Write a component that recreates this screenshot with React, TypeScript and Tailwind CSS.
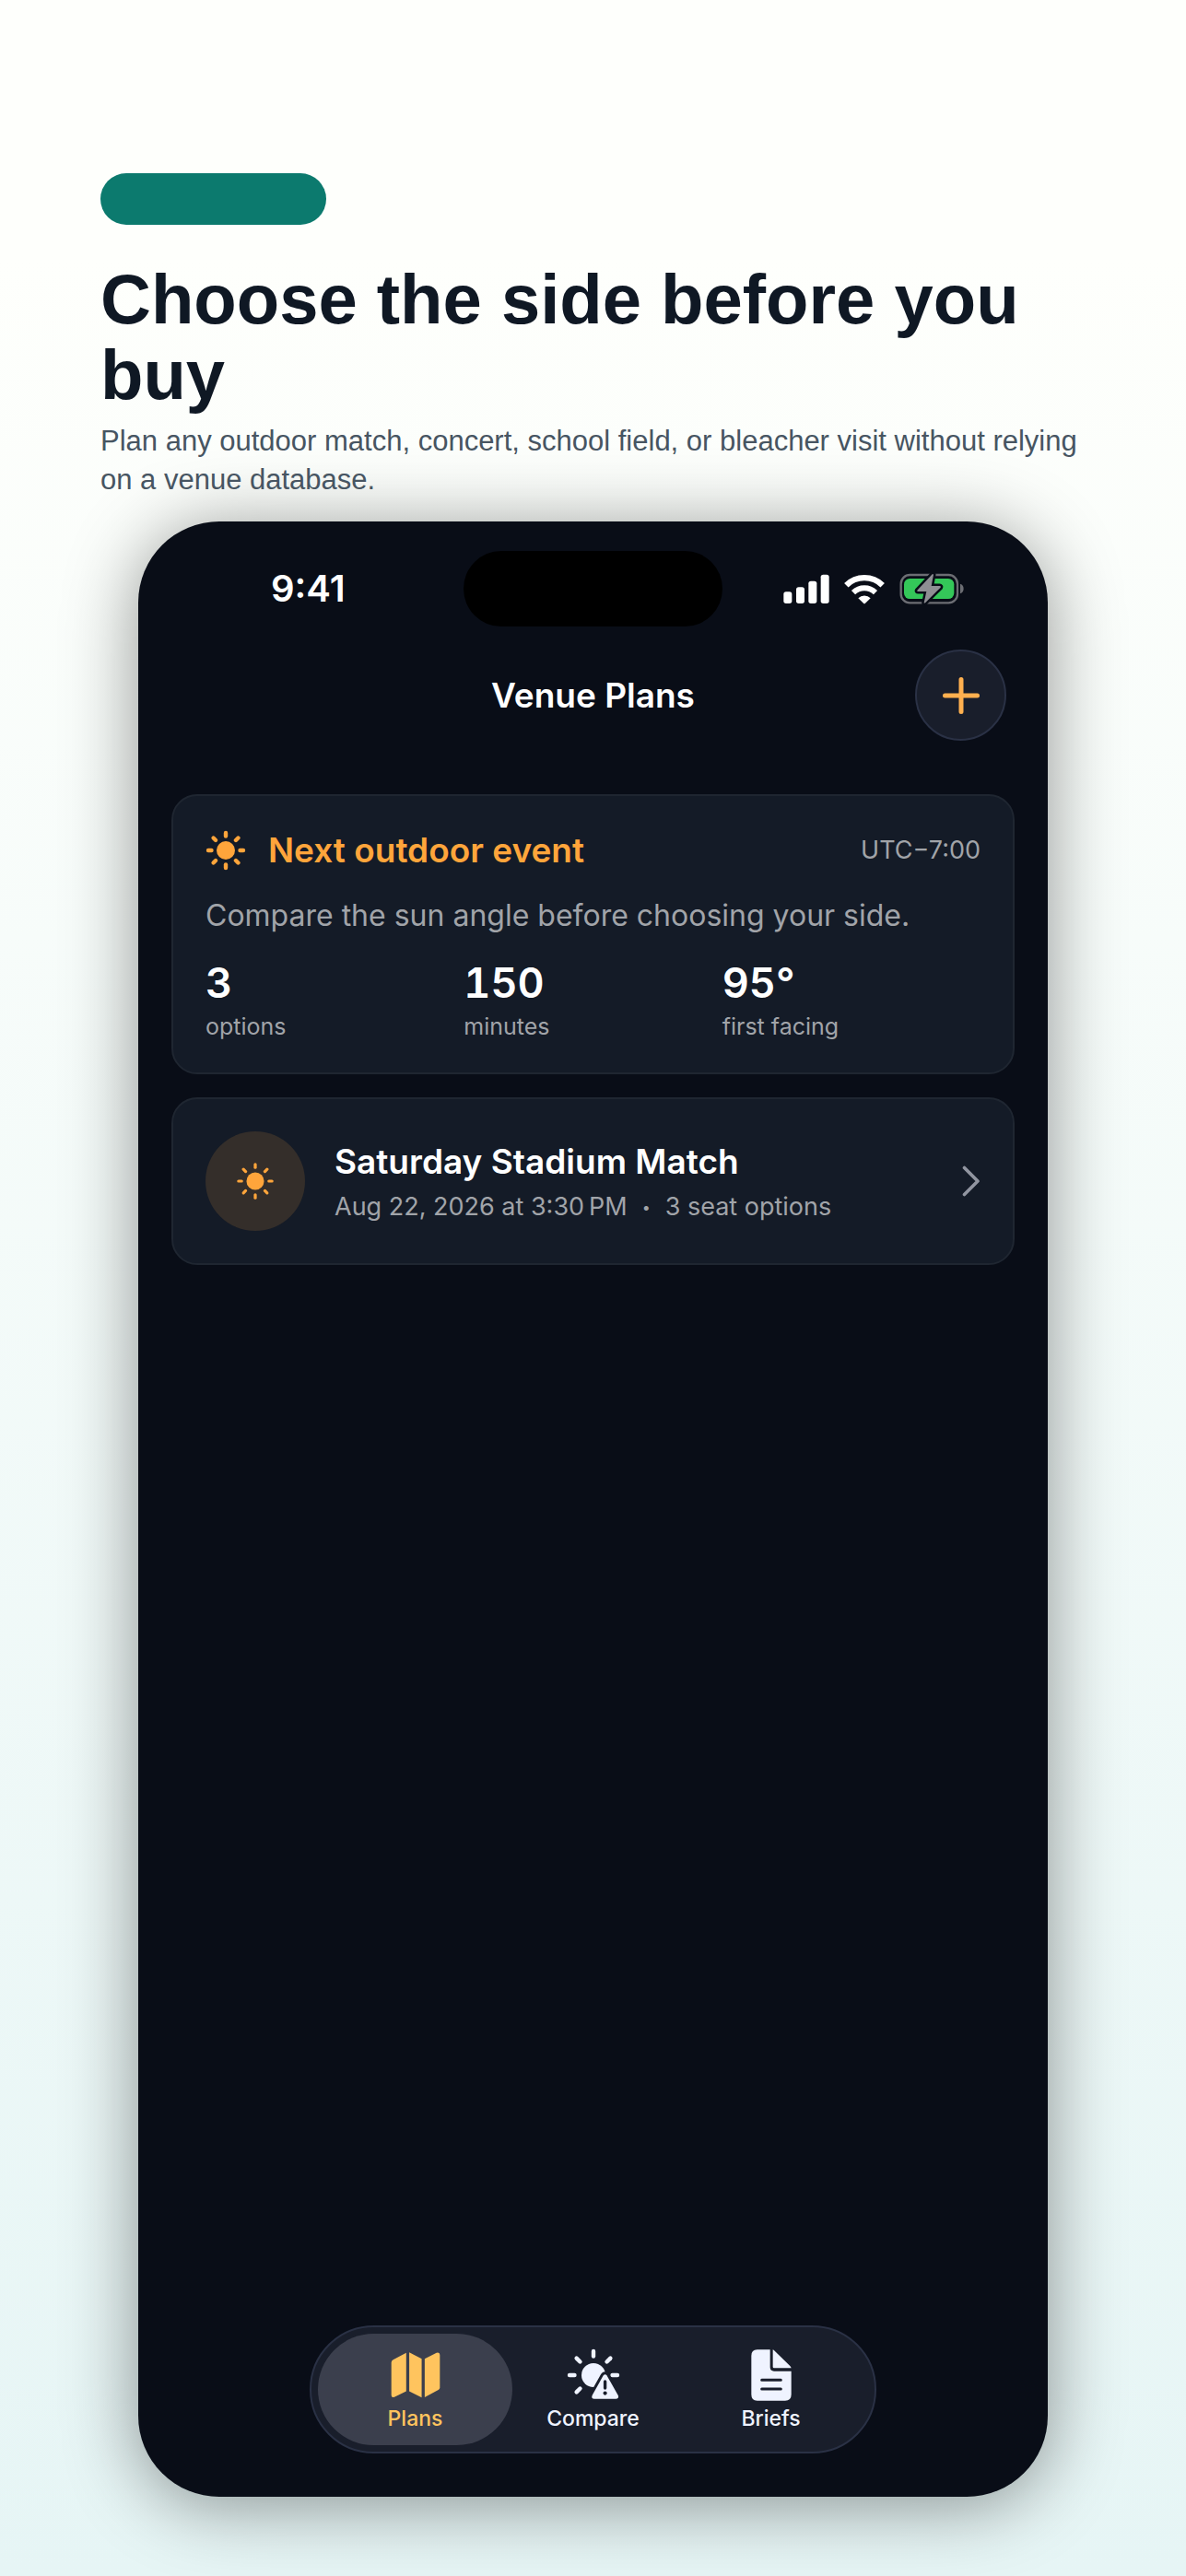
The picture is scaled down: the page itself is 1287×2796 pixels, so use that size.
import { ReactNode, useState } from "react";

const RAYS = [0, 45, 90, 135, 180, 225, 270, 315];

const Sun = ({ className, ray }: { className: string; ray: number }) => (
  <svg viewBox="-22 -22 44 44" className={className} aria-hidden="true">
    <circle r="10" fill="currentColor" />
    {RAYS.map((angle) => (
      <path
        key={angle}
        d="M0 -15.5V-19"
        stroke="currentColor"
        strokeWidth={ray}
        strokeLinecap="round"
        transform={`rotate(${angle})`}
      />
    ))}
  </svg>
);

const Signal = () => (
  <svg viewBox="0 0 150 96" className="w-[50px] h-8 fill-white">
    <rect x="1" y="58" width="27" height="38" rx="8" />
    <rect x="42" y="43" width="27" height="53" rx="8" />
    <rect x="82" y="23" width="27" height="73" rx="8" />
    <rect x="122" y="2" width="27" height="94" rx="8" />
  </svg>
);

const Wifi = () => (
  <svg viewBox="0 0 132 98" className="w-11 h-[33px]" fill="none">
    <path d="M7 36A84 84 0 0 1 125 36" stroke="#fff" strokeWidth="19" />
    <path d="M30 60A52 52 0 0 1 102 60" stroke="#fff" strokeWidth="18" />
    <path d="M46 78A29 29 0 0 1 86 78L69 95Q66 98 63 95Z" fill="#fff" />
  </svg>
);

const Battery = () => (
  <svg viewBox="0 0 210 102" className="w-[70px] h-[34px]">
    <rect
      x="5"
      y="6"
      width="184"
      height="91"
      rx="29"
      fill="none"
      stroke="#6c6d73"
      strokeWidth="7"
    />
    <rect x="15" y="18" width="163" height="66" rx="19" fill="#34c759" />
    <path d="M198 35Q209 39 209 51Q209 63 198 67Z" fill="#6c6d73" />
    <path
      d="M107 4L58 56Q56 60 61 60H88L80 97Q82 99 85 96L134 47Q136 42 131 42H104L111 5Q109 2 107 4Z"
      fill="#8e8e93"
      stroke="#090d17"
      strokeWidth="15"
      strokeLinejoin="round"
      paintOrder="stroke"
    />
  </svg>
);

const MapIcon = () => (
  <svg viewBox="0 0 162 152" className="w-[54px] h-[50px] fill-current">
    <path d="M50 2V129L11 148Q1 151 1 142V34Q1 28 7 25Z" />
    <path d="M60 1L101 22V150L60 129Z" />
    <path d="M111 22L150 2Q161 -1 161 9V117Q161 122 156 125L111 149Z" />
  </svg>
);

const CompareIcon = () => (
  <svg viewBox="-29 -29 58 58" className="w-[58px] h-[58px]">
    <circle r="13" fill="currentColor" />
    {[-135, -90, -45, 0, 45, 90].map((angle) => (
      <path
        key={angle}
        d="M0 -20.5V-26"
        stroke="currentColor"
        strokeWidth="4.4"
        strokeLinecap="round"
        transform={`rotate(${angle})`}
      />
    ))}
    <path
      d="M10.6 .6Q12.6 -2 14.6 .6L26.8 22Q28 25.7 24 25.7H1Q-2.8 25.7 -1.4 22Z"
      fill="currentColor"
      stroke="#191e2b"
      strokeWidth="6"
      paintOrder="stroke"
    />
    <path
      d="M12.6 7V14"
      stroke="#191e2b"
      strokeWidth="3.4"
      strokeLinecap="round"
    />
    <circle cx="12.6" cy="19.6" r="2.1" fill="#191e2b" />
  </svg>
);

const BriefIcon = () => (
  <svg viewBox="0 0 132 168" className="w-11 h-14">
    <path
      d="M20 1H62V58Q62 71 75 71H131V147Q131 167 111 167H20Q1 167 1 147V21Q1 1 20 1Z"
      fill="currentColor"
    />
    <path
      d="M71 1Q74 2 77 5L127 54Q130 58 131 61H75Q71 61 71 57Z"
      fill="currentColor"
    />
    <path
      d="M35 100H97M35 129H97"
      stroke="#191e2b"
      strokeWidth="9"
      strokeLinecap="round"
    />
  </svg>
);

const stats = [
  { value: "3", label: "options" },
  { value: "150", label: "minutes" },
  { value: "95°", label: "first facing" },
];

const tabs: { name: string; icon: ReactNode }[] = [
  { name: "Plans", icon: <MapIcon /> },
  { name: "Compare", icon: <CompareIcon /> },
  { name: "Briefs", icon: <BriefIcon /> },
];

const App = () => {
  const [active, setActive] = useState("Plans");
  return (
    <main className="min-h-screen flex flex-col bg-linear-to-b from-[#fefffc] from-10% to-[#e6f5f5] font-['Liberation_Sans',sans-serif]">
      <header className="relative z-10 pt-[188px] pl-[109px] pr-[100px]">
        <div className="w-[245px] h-14 rounded-[28px] bg-[#0c7a6e]"></div>
        <h1 className="mt-10 text-[76px] leading-[82px] font-bold text-[#0f1824]">
          Choose the side before you buy
        </h1>
        <p className="mt-[10px] text-[31px] leading-[42px] text-[#475562]">
          Plan any outdoor match, concert, school field, or bleacher visit
          without relying on a venue database.
        </p>
      </header>

      <section className="flex-1 flex flex-col mt-6 mx-[150px] mb-[86px] rounded-[88px] bg-[#090d17] text-white font-['Inter',sans-serif] shadow-[0_8px_80px_rgba(0,0,0,0.42)]">
        <div className="grid grid-cols-[1fr_auto_1fr] items-center pt-8">
          <span className="pl-[144px] text-[40px] leading-[48px] font-semibold">
            9:41
          </span>
          <div className="w-[281px] h-[82px] rounded-full bg-black"></div>
          <div className="flex items-center justify-end gap-4 pr-[91px]">
            <Signal />
            <Wifi />
            <Battery />
          </div>
        </div>

        <div className="grid grid-cols-[1fr_auto_1fr] items-center mt-[25px] pr-[45px] pl-[45px]">
          <h2 className="col-start-2 text-[37px] leading-[46px] font-semibold">
            Venue Plans
          </h2>
          <button
            type="button"
            aria-label="Add plan"
            className="justify-self-end grid place-items-center w-[99px] h-[99px] rounded-full bg-[#191e2b] border-2 border-[#2a3145] text-[#ffb04f] cursor-pointer"
          >
            <svg viewBox="0 0 40 40" className="w-10 h-10">
              <path
                d="M20 2.5V37.5M2.5 20H37.5"
                stroke="currentColor"
                strokeWidth="5"
                strokeLinecap="round"
              />
            </svg>
          </button>
        </div>

        <div className="flex flex-col gap-[25px] mt-[58px] px-9">
          <article className="px-[35px] pt-9 pb-[35px] rounded-[28px] bg-[#141b27] border-2 border-[#1f2631]">
            <div className="flex items-center">
              <Sun className="w-11 h-11 text-[#ffa53b]" ray={4.4} />
              <h3 className="ml-6 text-[37px] leading-[46px] font-semibold text-[#ffa53b]">
                Next outdoor event
              </h3>
              <span className="ml-auto text-[27px] leading-[34px] text-[#a1a4a9]">
                UTC−7:00
              </span>
            </div>
            <p className="mt-[27px] text-[32px] leading-[42px] text-[#a1a4a9]">
              Compare the sun angle before choosing your side.
            </p>
            <dl className="grid grid-cols-3 mt-[25px]">
              {stats.map((stat) => (
                <div key={stat.label} className="flex flex-col-reverse gap-[5px]">
                  <dt className="text-[25px] leading-[30px] text-[#a1a4a9]">
                    {stat.label}
                  </dt>
                  <dd className="text-[45px] leading-[54px] font-semibold tabular-nums">
                    {stat.value}
                  </dd>
                </div>
              ))}
            </dl>
          </article>

          <a
            href="#saturday-stadium-match"
            className="flex items-center px-[35px] py-[35px] rounded-[28px] bg-[#141b27] border-2 border-[#1f2631]"
          >
            <span className="grid place-items-center w-[108px] h-[108px] rounded-full bg-[#342e2a]">
              <Sun className="w-[42px] h-[42px] text-[#ffa53b]" ray={3.4} />
            </span>
            <span className="flex flex-col gap-[9px] ml-8">
              <span className="text-[37px] leading-[46px] font-semibold">
                Saturday Stadium Match
              </span>
              <span className="flex items-center gap-4 text-[27px] leading-[34px] text-[#a1a4a9]">
                <span>Aug 22, 2026 at 3:30&#8239;PM</span>
                <span className="text-base">•</span>
                <span>3 seat options</span>
              </span>
            </span>
            <svg viewBox="0 0 20 34" className="ml-auto w-5 h-[34px]" fill="none">
              <path
                d="M2.5 2.5L17 17L2.5 31.5"
                stroke="#9195a0"
                strokeWidth="3.6"
                strokeLinecap="round"
                strokeLinejoin="round"
              />
            </svg>
          </a>
        </div>

        <nav className="flex self-center mt-auto mb-[47px] p-[7px] rounded-full bg-[#191e2b] border-2 border-[#2a3145]">
          {tabs.map((tab) => (
            <button
              key={tab.name}
              type="button"
              onClick={() => setActive(tab.name)}
              className={`flex flex-col items-center w-[211px] h-[121px] pt-[14px] not-first:-ml-[18px] rounded-full cursor-pointer ${
                active === tab.name
                  ? "bg-[#3b3f4d] text-[#ffc45e]"
                  : "text-[#eff3ff]"
              }`}
            >
              <span className="grid place-items-center h-[62px]">
                {tab.icon}
              </span>
              <span className="mt-[2px] text-[23px] leading-[28px] font-medium">
                {tab.name}
              </span>
            </button>
          ))}
        </nav>
      </section>
    </main>
  );
};
export default App;
